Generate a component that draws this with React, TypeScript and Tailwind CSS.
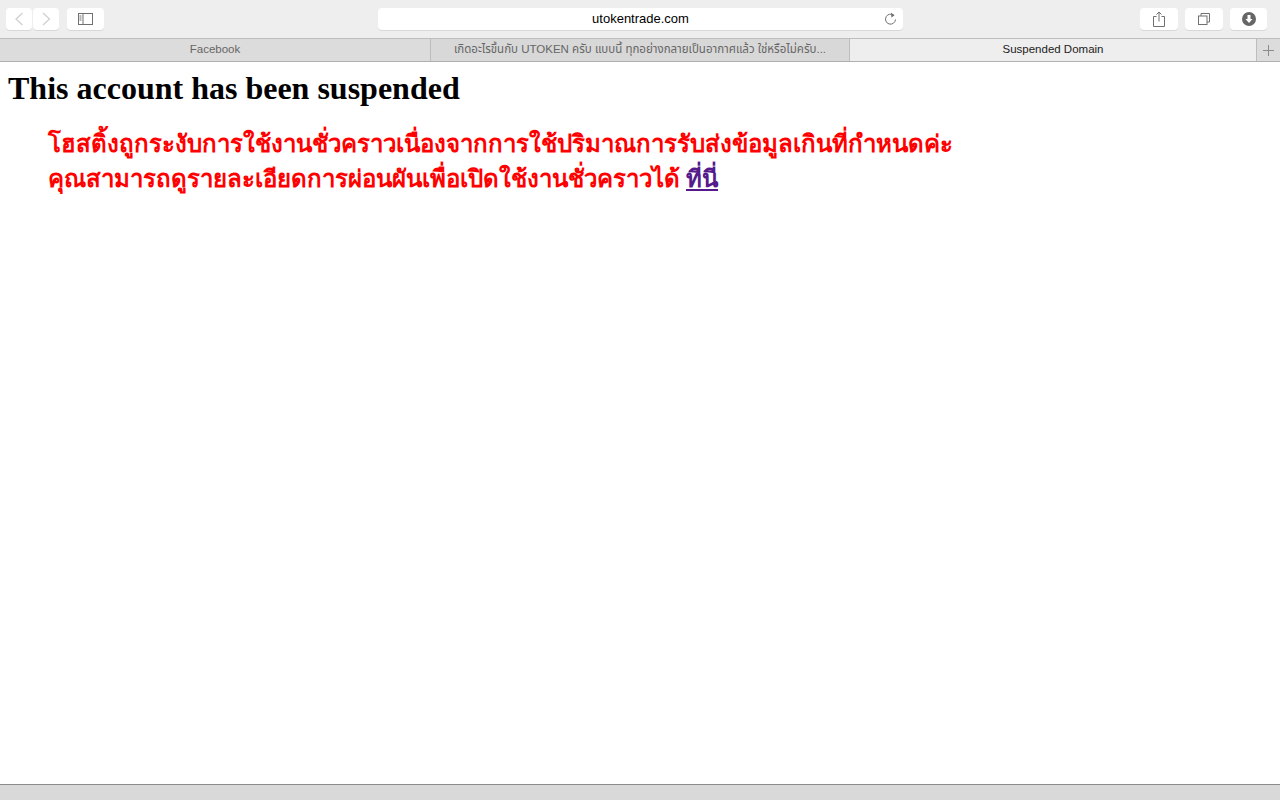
import React from "react";

const toolBtn = "flex h-[22px] items-center justify-center rounded-[4px] bg-white shadow-[0_1px_0_#d8d8d8]";

function App() {
  return (
    <div className="flex h-[800px] w-[1280px] flex-col overflow-hidden bg-white font-['Liberation_Sans',sans-serif]">
      {/* toolbar */}
      <div className="relative flex h-[39px] shrink-0 items-start justify-between border-b border-[#bdbdbd] bg-[#eeeeee] pl-[6px] pr-[13px] pt-[8px]">
        <div className="flex">
          <div className={`${toolBtn} w-[26px]`}>
            <svg width="12" height="16" viewBox="0 0 12 16" fill="none" stroke="#d0d0d0" strokeWidth="1.3">
              <path d="M9.5 2 L3 8 L9.5 14" />
            </svg>
          </div>
          <div className={`${toolBtn} ml-px w-[26px]`}>
            <svg width="12" height="16" viewBox="0 0 12 16" fill="none" stroke="#d0d0d0" strokeWidth="1.3">
              <path d="M3 2 L9.5 8 L3 14" />
            </svg>
          </div>
          <div className={`${toolBtn} ml-2 w-[37px]`}>
            <svg width="15" height="12" viewBox="0 0 15 12" fill="none" stroke="#707070">
              <rect x="0.5" y="0.5" width="14" height="11" />
              <path d="M5 0.5 V11.5" />
              <path d="M1.5 3 H3.5 M1.5 5 H3.5 M1.5 7 H3.5" />
            </svg>
          </div>
        </div>
        <div className={`${toolBtn} absolute left-[378px] top-[8px] w-[525px]`}>
          <span className="text-[13px] text-black">utokentrade.com</span>
          <svg className="absolute right-[6px] top-[4px]" width="13" height="14" viewBox="0 0 13 14" fill="none" stroke="#707070">
            <path d="M9.8 3.4 A5 5 0 1 0 11.5 7.5" />
            <path d="M7 0.8 L10.6 3.2 L7.4 5.6" fill="#707070" stroke="none" />
          </svg>
        </div>
        <div className="flex gap-[7px]">
          <div className={`${toolBtn} w-[38px]`}>
            <svg width="12" height="16" viewBox="0 0 12 16" fill="none" stroke="#707070">
              <path d="M3.5 5.5 H0.5 V15.5 H11.5 V5.5 H8.5" />
              <path d="M6 1 V10.5 M3.5 3.5 L6 1 L8.5 3.5" />
            </svg>
          </div>
          <div className={`${toolBtn} w-[38px]`}>
            <svg width="12" height="12" viewBox="0 0 12 12" fill="none" stroke="#707070">
              <rect x="0.5" y="3" width="8.5" height="8.5" />
              <path d="M3 3 V0.5 H11.5 V9 H9" />
            </svg>
          </div>
          <div className={`${toolBtn} w-[37px]`}>
            <svg width="14" height="14" viewBox="0 0 14 14">
              <circle cx="7" cy="7" r="7" fill="#666666" />
              <path d="M5.5 3 H8.5 V7 H10.5 L7 11 L3.5 7 H5.5 Z" fill="#ffffff" />
            </svg>
          </div>
        </div>
      </div>

      {/* tabs */}
      <div className="flex h-[23px] shrink-0 border-b border-[#b0b0b0] bg-[#dcdcdc] text-[11.5px] text-[#666666]">
        <div className="flex w-[431px] items-center justify-center border-r border-[#bdbdbd]">Facebook</div>
        <div className="flex w-[419px] items-center justify-center border-r border-[#bdbdbd] bg-[#d8d8d8] font-['Liberation_Sans','Noto_Sans_Thai',sans-serif]">
          เกิดอะไรขึ้นกับ UTOKEN ครับ แบบนี้ ทุกอย่างกลายเป็นอากาศแล้ว ใช่หรือไม่ครับ...
        </div>
        <div className="flex flex-1 items-center justify-center bg-[#eeeeee] text-[#222222]">Suspended Domain</div>
        <div className="flex w-[24px] items-center justify-center border-l border-[#bdbdbd]">
          <svg width="11" height="11" viewBox="0 0 11 11" stroke="#8a8a8a">
            <path d="M5.5 0 V11 M0 5.5 H11" />
          </svg>
        </div>
      </div>

      {/* page */}
      <div className="min-h-0 flex-1 p-2 font-['Liberation_Serif',serif] text-black">
        <h1 className="text-[32px] leading-[37px] font-bold">This account has been suspended</h1>
        <div className="mt-[20px] ml-10 text-[24px] leading-[35px] font-bold text-[#ff0000]">
          <p>โฮสติ้งถูกระงับการใช้งานชั่วคราวเนื่องจากการใช้ปริมาณการรับส่งข้อมูลเกินที่กำหนดค่ะ</p>
          <p>
            คุณสามารถดูรายละเอียดการผ่อนผันเพื่อเปิดใช้งานชั่วคราวได้{" "}
            <a href="#" className="text-[#551a8b] underline">ที่นี่</a>
          </p>
        </div>
      </div>

      {/* status bar */}
      <div className="h-4 shrink-0 border-t border-[#8c8c8c] bg-[#d9d9d9]" />
    </div>
  );
}

export default App;
